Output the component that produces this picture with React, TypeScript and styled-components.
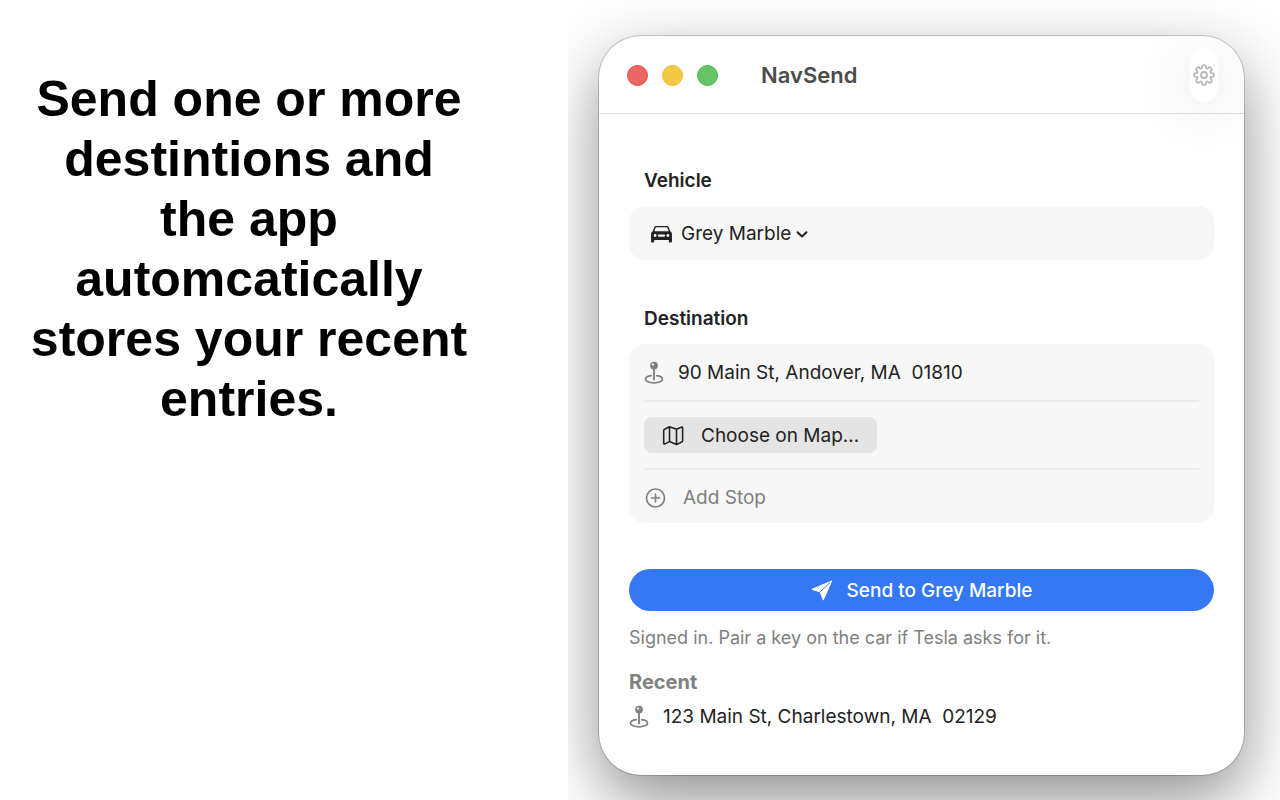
import React from "react";
import styled, { createGlobalStyle } from "styled-components";

const GlobalStyle = createGlobalStyle`
  *, *::before, *::after { box-sizing: border-box; }
  body { margin: 0; background: #fff; }
  h1, h2, p, ul { margin: 0; padding: 0; }
  button, input, select { font: inherit; color: inherit; margin: 0; border: 0; background: none; padding: 0; }
`;

const Page = styled.main`
  display: grid;
  grid-template-columns: 568fr 712fr;
  min-height: 100vh;
`;

const Caption = styled.p`
  padding: 69px 94px 0 24px;
  font: bold 50px/60px "Liberation Sans", Arial, sans-serif;
  color: #000;
  text-align: center;
`;

const Stage = styled.section`
  overflow: hidden;
  padding: 36px 36px 25px 31px;
  display: flex;
`;

const Window = styled.div`
  flex: 1;
  border-radius: 42px;
  background: #fff;
  box-shadow: 0 0 0 1px rgba(0, 0, 0, 0.18), 0 24px 64px rgba(0, 0, 0, 0.44);
  font-family: Inter, "Liberation Sans", sans-serif;
  font-size: 19px;
  line-height: 24px;
  color: #222;
  overflow: hidden;
`;

const TitleBar = styled.header`
  display: flex;
  align-items: center;
  height: 78px;
  padding: 1px 26px 0 28px;
  border-bottom: 1px solid #dedede;
`;

const Lights = styled.div`
  display: flex;
  gap: 14px;
  margin-right: 43px;
`;

const Light = styled.button<{ $fill: string; $edge: string }>`
  width: 21px;
  height: 21px;
  border-radius: 50%;
  background: ${(p) => p.$fill};
  border: 1px solid ${(p) => p.$edge};
`;

const Title = styled.h1`
  flex: 1;
  font-size: 22px;
  line-height: 28px;
  font-weight: 600;
  color: #4b4b4b;
`;

const SettingsButton = styled.button`
  display: flex;
  align-items: center;
  justify-content: center;
  width: 28px;
  height: 54px;
  border-radius: 14px;
  background: #fff;
  color: #b8b8b8;
  box-shadow: 0 8px 56px rgba(0, 0, 0, 0.14);
`;

const Content = styled.div`
  display: flex;
  flex-direction: column;
  padding: 54px 30px 44px;
`;

const SectionTitle = styled.h2`
  padding: 0 15px;
  margin-bottom: 12px;
  font-size: 19px;
  line-height: 26px;
  font-weight: 600;
`;

const Card = styled.div`
  border-radius: 16px;
  background: #f7f7f7;
  padding: 0 15px;
  margin-bottom: 46px;
`;

const VehicleRow = styled.label`
  display: flex;
  align-items: center;
  height: 54px;
  padding: 2px 0 0 6px;
`;

const VehicleSelect = styled.select`
  appearance: none;
  field-sizing: content;
  margin: 0 5px 0 8px;
`;

const Row = styled.div<{ $height: number }>`
  display: flex;
  align-items: center;
  height: ${(p) => p.$height}px;
  padding-top: 2px;
  & + & { border-top: 2px solid #ebebeb; padding-top: 0; }
`;

const AddressInput = styled.input`
  flex: 1;
  margin-left: 14px;
  outline: 0;
`;

const MapButton = styled.button`
  display: flex;
  align-items: center;
  gap: 17px;
  height: 36px;
  padding: 1px 18px 0;
  border-radius: 8px;
  background: #e4e4e4;
`;

const AddButton = styled.button`
  display: flex;
  align-items: center;
  gap: 16px;
  padding-top: 2px;
  color: #7f7f7f;
`;

const SendButton = styled.button`
  display: flex;
  align-items: center;
  justify-content: center;
  gap: 14px;
  height: 42px;
  padding-top: 2px;
  border-radius: 21px;
  background: #3478f6;
  color: #fff;
  font-weight: 500;
`;

const Status = styled.p`
  margin-top: 15px;
  font-size: 18px;
  line-height: 24px;
  color: #808080;
`;

const RecentTitle = styled.h2`
  margin-top: 19px;
  font-size: 20px;
  line-height: 26px;
  font-weight: 700;
  color: #808080;
`;

const RecentButton = styled.button`
  display: flex;
  align-items: center;
  gap: 14px;
  margin-top: 10px;
  white-space: pre;
`;

const gearPath = (() => {
  const points: [number, number][] = [];
  for (let i = 0; i < 8; i++) {
    const shape: [number, number][] = [[-15, 7.1], [-12, 9.2], [-7, 10], [7, 10], [12, 9.2], [15, 7.1]];
    for (const [offset, radius] of shape) {
      const angle = ((i * 45 + offset) * Math.PI) / 180;
      points.push([11 + radius * Math.sin(angle), 11 - radius * Math.cos(angle)]);
    }
  }
  const mid = (a: [number, number], b: [number, number]) =>
    `${((a[0] + b[0]) / 2).toFixed(2)} ${((a[1] + b[1]) / 2).toFixed(2)}`;
  const last = points[points.length - 1];
  return (
    `M${mid(last, points[0])}` +
    points
      .map((p, i) => `Q${p[0].toFixed(2)} ${p[1].toFixed(2)} ${mid(p, points[(i + 1) % points.length])}`)
      .join("") +
    "Z"
  );
})();

const GearIcon = () => (
  <svg width="22" height="22" viewBox="0 0 22 22" fill="none" stroke="currentColor" strokeWidth="1.8" aria-hidden="true">
    <path d={gearPath} strokeLinejoin="round" />
    <circle cx="11" cy="11" r="3" />
  </svg>
);

const CarIcon = () => (
  <svg width="23" height="19" viewBox="0 0 24 20" fill="currentColor" aria-hidden="true">
    <path
      fillRule="evenodd"
      d="M6.6 1h10.8c1.2 0 2 .6 2.4 1.7l1.4 4c1.2.8 1.8 1.7 1.8 3.3v7.4c0 .6-.4 1-1 1h-1.3c-.6 0-1-.4-1-1v-1.6H4.300v1.6c0 .6-.4 1-1 1H2c-.6 0-1-.4-1-1V10c0-1.600.6-2.500 1.800-3.300l1.400-4C4.600 1.600 5.400 1 6.600 1ZM6.700 2.400c-.5 0-.8.2-1 .7L4.500 6.600h15l-1.200-3.500c-.2-.5-.5-.7-1-.7ZM5.300 9.600a1.500 1.500 0 1 0 0 3 1.500 1.500 0 0 0 0-3ZM18.700 9.600a1.500 1.500 0 1 0 0 3 1.500 1.500 0 0 0 0-3ZM9.300 9.900a1.200 1.200 0 0 0 0 2.400h5.400a1.200 1.200 0 0 0 0-2.400Z"
    />
  </svg>
);

const ChevronIcon = () => (
  <svg width="12" height="12" viewBox="0 0 12 12" fill="none" stroke="currentColor" strokeWidth="2" strokeLinecap="round" strokeLinejoin="round" aria-hidden="true">
    <path d="M1.500 4.200 6 8.500l4.500-4.300" />
  </svg>
);

const PinIcon = () => (
  <svg width="20" height="24" viewBox="0 0 20 24" fill="none" stroke="#808080" aria-hidden="true">
    <path d="M7.200 14.700C3.800 15.100 1.500 16.500 1.500 18.200c0 2.100 3.800 3.700 8.500 3.700s8.500-1.600 8.500-3.700c0-1.700-2.300-3.100-5.700-3.500" strokeWidth="1.700" strokeLinecap="round" />
    <path d="M10 7v11.500" strokeWidth="1.900" strokeLinecap="round" />
    <circle cx="10" cy="4.600" r="3.900" fill="#808080" stroke="none" />
    <circle cx="8.900" cy="3.500" r="1.200" fill="#e4e4e4" stroke="none" />
  </svg>
);

const MapIcon = () => (
  <svg width="22" height="22" viewBox="0 0 22 22" fill="none" stroke="currentColor" strokeWidth="1.600" strokeLinejoin="round" aria-hidden="true">
    <path d="M1.700 5.700c0-.7.300-1.100.9-1.400l4.900-2.600 7 2.600 4.700-2.100c.8-.4 1.400 0 1.400.8v12.600c0 .7-.3 1.100-.9 1.400l-5.200 2.600-7-3-4.400 2.300c-.8.400-1.400 0-1.400-.8ZM7.500 1.700v14.900M14.500 4.300v15.300" />
  </svg>
);

const PlusCircleIcon = () => (
  <svg width="23" height="22" viewBox="0 0 23 22" fill="none" stroke="currentColor" strokeWidth="1.600" strokeLinecap="round" aria-hidden="true">
    <circle cx="11.500" cy="11" r="9" />
    <path d="M11.500 7v8M7.500 11h8" />
  </svg>
);

const PlaneIcon = () => (
  <svg width="22" height="22" viewBox="0 0 22 22" aria-hidden="true">
    <path
      d="M20 .7 1.200 8.800c-.7.300-.7 1 0 1.200L8.700 12.300l3 7.500c.3.700.9.700 1.200 0L21 1.600c.3-.7-.3-1.200-1-.9Z"
      fill="currentColor"
    />
    <path d="M8.700 12.300 19 2.600" stroke="#3478f6" strokeWidth="1" strokeLinecap="round" />
  </svg>
);

export default function App() {
  return (
    <>
      <GlobalStyle />
      <Page>
        <Caption>Send one or more destintions and the app automcatically stores your recent entries.</Caption>
        <Stage>
          <Window>
            <TitleBar>
              <Lights>
                <Light $fill="#ed6665" $edge="#e24b4a" aria-label="Close" />
                <Light $fill="#f3c843" $edge="#ecbb2c" aria-label="Minimize" />
                <Light $fill="#66c466" $edge="#45b649" aria-label="Zoom" />
              </Lights>
              <Title>NavSend</Title>
              <SettingsButton aria-label="Settings">
                <GearIcon />
              </SettingsButton>
            </TitleBar>
            <Content>
              <SectionTitle>Vehicle</SectionTitle>
              <Card>
                <VehicleRow>
                  <CarIcon />
                  <VehicleSelect aria-label="Vehicle" defaultValue="Grey Marble">
                    <option>Grey Marble</option>
                  </VehicleSelect>
                  <ChevronIcon />
                </VehicleRow>
              </Card>
              <SectionTitle>Destination</SectionTitle>
              <Card>
                <Row $height={56}>
                  <PinIcon />
                  <AddressInput aria-label="Destination" defaultValue="90 Main St, Andover, MA  01810" />
                </Row>
                <Row $height={68}>
                  <MapButton>
                    <MapIcon />
                    Choose on Map…
                  </MapButton>
                </Row>
                <Row $height={55}>
                  <AddButton>
                    <PlusCircleIcon />
                    Add Stop
                  </AddButton>
                </Row>
              </Card>
              <SendButton>
                <PlaneIcon />
                Send to Grey Marble
              </SendButton>
              <Status>Signed in. Pair a key on the car if Tesla asks for it.</Status>
              <RecentTitle>Recent</RecentTitle>
              <RecentButton>
                <PinIcon />
                {"123 Main St, Charlestown, MA  02129"}
              </RecentButton>
            </Content>
          </Window>
        </Stage>
      </Page>
    </>
  );
}
